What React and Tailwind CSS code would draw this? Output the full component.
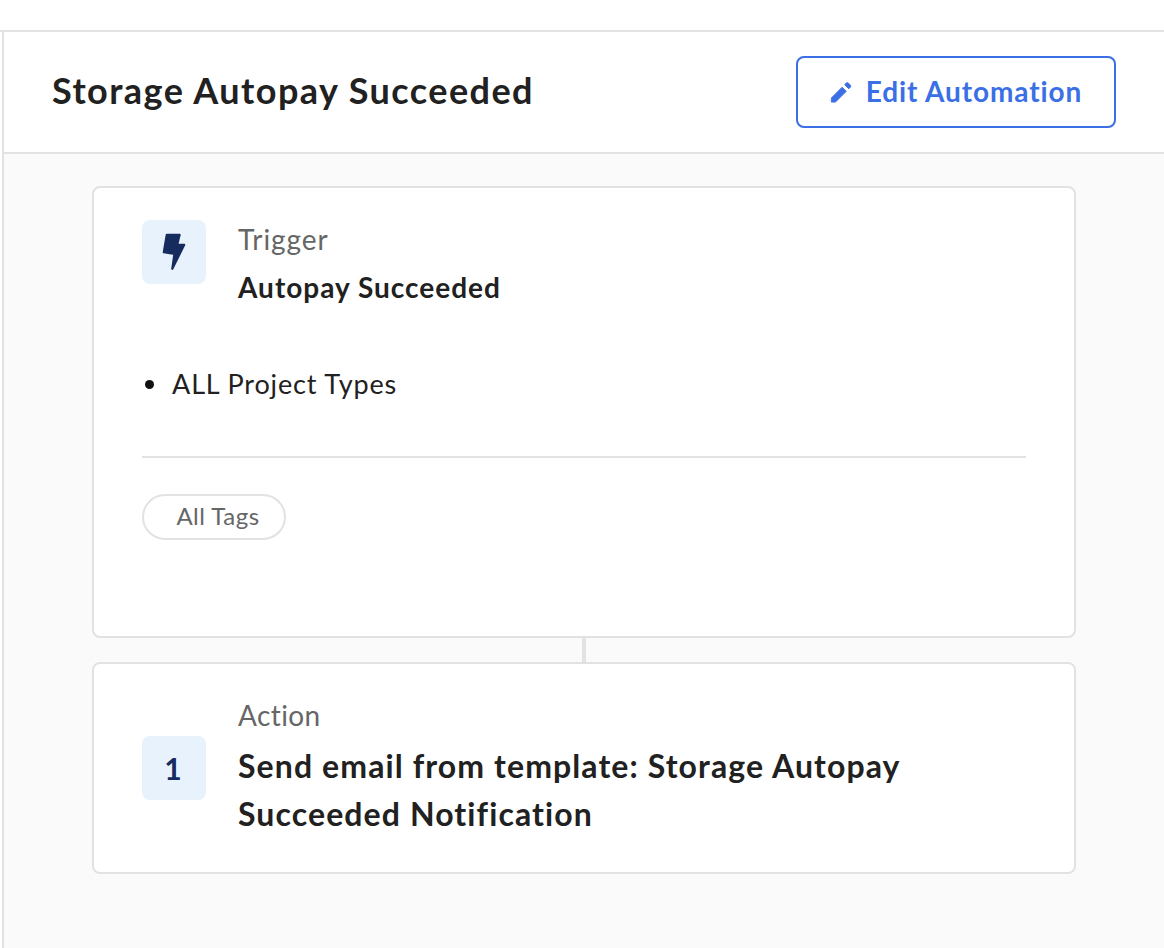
export default function App() {
  return (
    <div className="w-[1164px] h-[948px] overflow-hidden bg-white pt-[30px] font-['Lato','Noto_Sans',sans-serif] text-[#212121]">
      <div className="h-full border-t-2 border-[#e2e2e2] pl-[2px]">
        <div className="h-full border-l-2 border-[#e2e2e2] flex flex-col">
          <header className="h-[122px] shrink-0 border-b-2 border-[#e2e2e2] flex items-center justify-between pl-[48px] pr-[48px]">
            <h1 className="text-[36px] font-bold tracking-[1.44px] leading-none -mt-[4px]">Storage Autopay Succeeded</h1>
            <button className="w-[320px] h-[72px] rounded-lg border-2 border-[#3b6fe6] flex items-center justify-center gap-[14px] text-[#3b6fe6] text-[28px] font-bold tracking-[0.9px] pb-[2px]">
              <svg viewBox="0 0 24 24" className="w-[22px] h-[22px] mt-[2px]" fill="currentColor" stroke="currentColor" strokeWidth="1" strokeLinejoin="round">
                <path d="M1.5 18.5L13.2 6.8l4.5 4.5L6 23H1.5z" />
                <path d="M16 4l4.5 4.5 1.7-1.7a1.6 1.6 0 0 0 0-2.3l-2.2-2.2a1.6 1.6 0 0 0-2.3 0z" />
              </svg>
              Edit Automation
            </button>
          </header>
          <main className="flex-1 bg-[#fafafa] px-[88px] pt-[32px] flex flex-col items-stretch">
            <section className="h-[452px] rounded-lg border-2 border-[#e2e2e2] bg-white pl-[48px] pr-[48px] pt-[28px]">
              <div className="flex gap-[32px]">
                <div className="mt-[4px] w-[64px] h-[64px] rounded-lg bg-[#e8f2fd] flex items-center justify-center">
                  <svg viewBox="0 0 24 38" className="w-[24px] h-[38px]" fill="#162b5e" stroke="#162b5e" strokeWidth="2.2" strokeLinejoin="round">
                    <path d="M4.8 1.8H17.6L15.2 11.8h7L10.3 35.8 12.4 21 1.8 19.2z" />
                  </svg>
                </div>
                <div className="-mt-[1px]">
                  <div className="text-[28px] leading-[48px] text-[#666666] tracking-[0.9px]">Trigger</div>
                  <div className="text-[28px] leading-[48px] font-bold tracking-[1px]">Autopay Succeeded</div>
                </div>
              </div>
              <ul className="mt-[49px] text-[27px] leading-[48px] tracking-[0.85px]">
                <li className="flex items-center">
                  <span className="w-[9px] h-[9px] ml-[3px] mr-[18px] rounded-full bg-[#111111]" />
                  ALL Project Types
                </li>
              </ul>
              <div className="mt-[48px] h-[2px] bg-[#e2e2e2]" />
              <div className="mt-[36px] w-[144px] h-[46px] rounded-full border-2 border-[#e2e2e2] flex items-center justify-center pl-[8px] text-[24px] text-[#666666] tracking-[0.5px] pb-[2px]">All Tags</div>
            </section>
            <div className="self-center w-[4px] h-[24px] bg-[#e2e2e2]" />
            <section className="h-[212px] rounded-lg border-2 border-[#e2e2e2] bg-white pl-[48px] pr-[48px] flex items-center gap-[32px]">
              <div className="shrink-0 w-[64px] h-[64px] rounded-lg bg-[#e8f2fd] flex items-center justify-center pr-[2px] text-[#162b5e] text-[30px] font-bold">1</div>
              <div className="-mt-[6px]">
                <div className="text-[28px] leading-[44px] text-[#666666] tracking-[0.4px]">Action</div>
                <div className="text-[32px] leading-[48px] font-bold tracking-[1.1px] w-[760px] mt-[5px]">Send email from template: Storage Autopay Succeeded Notification</div>
              </div>
            </section>
          </main>
        </div>
      </div>
    </div>
  );
}
